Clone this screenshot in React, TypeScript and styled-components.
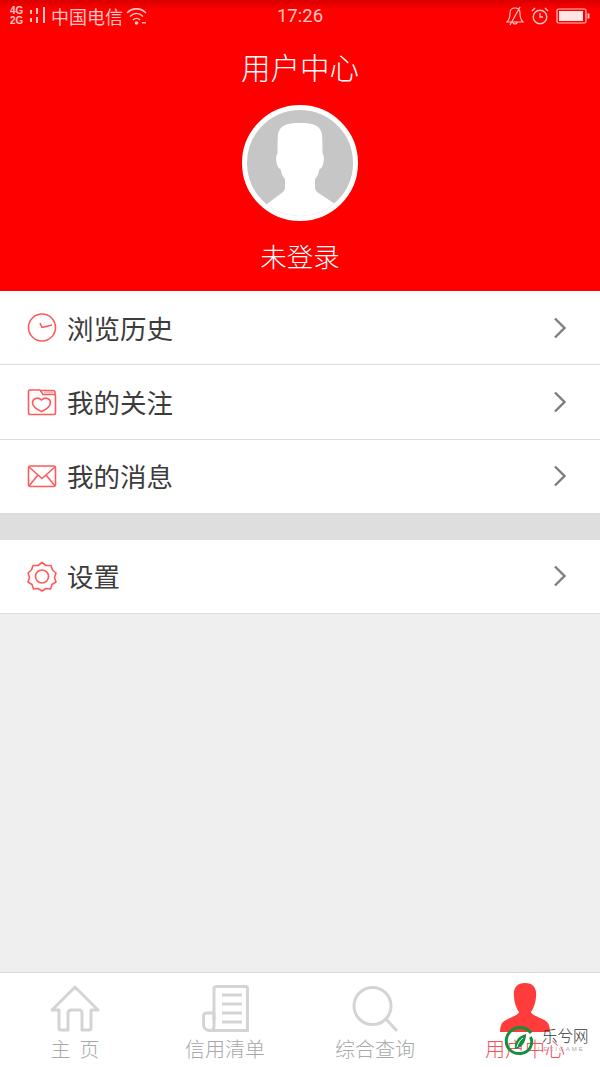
import React from 'react';
import styled, { createGlobalStyle } from 'styled-components';

const GlobalStyle = createGlobalStyle`
  html, body {
    margin: 0;
    padding: 0;
    background-color: #efefef;
    font-family: "Noto Sans CJK SC", "Liberation Sans", sans-serif;
  }
`;

const Page = styled.div`
  width: 600px;
  height: 1067px;
  display: flex;
  flex-direction: column;
  overflow: hidden;
  position: relative;
  background-color: #efefef;
`;

const Header = styled.header`
  height: 291px;
  flex: none;
  display: flex;
  flex-direction: column;
  align-items: center;
  background: linear-gradient(#d80000 0, #ff0000 10px);
  color: #fff;
`;

const StatusBar = styled.div`
  width: 100%;
  height: 32px;
  box-sizing: border-box;
  padding: 0 10px;
  display: grid;
  grid-template-columns: 1fr auto 1fr;
  align-items: center;
  color: #ffc4c4;
`;

const StatusLeft = styled.div`
  display: flex;
  align-items: center;
`;

const StatusRight = styled.div`
  display: flex;
  align-items: center;
  justify-content: flex-end;
  gap: 7px;
`;

const NetworkLabels = styled.div`
  display: flex;
  flex-direction: column;
  width: 19px;
  font: bold 10px/10px "Liberation Sans", sans-serif;
`;

const Carrier = styled.span`
  margin: 0 3px 0 4px;
  font-size: 18px;
  line-height: 20px;
`;

const Clock = styled.span`
  font: 18.5px/20px Roboto, sans-serif;
`;

const Title = styled.h1`
  margin: 14px 0 0;
  font-size: 29.5px;
  line-height: 40px;
  font-weight: 300;
`;

const Avatar = styled.div`
  width: 116px;
  height: 116px;
  box-sizing: border-box;
  margin-top: 19px;
  border: 5px solid #fff;
  border-radius: 50%;
  background-color: #c6c6c6;
  overflow: hidden;
  flex: none;
`;

const LoginState = styled.div`
  margin-top: 16px;
  font-size: 26.5px;
  line-height: 38px;
  font-weight: 300;
`;

const MenuGroup = styled.section`
  flex: none;
`;

const MenuRow = styled.div`
  height: 74.4px;
  box-sizing: border-box;
  padding: 0 33px 0 27px;
  display: flex;
  align-items: center;
  background-color: #fff;
  border-bottom: 1px solid #dcdcdc;
`;

const MenuLabel = styled.span`
  flex: 1;
  margin-left: 9px;
  font-size: 26.5px;
  line-height: 36px;
  font-weight: 400;
  color: #3c3c3c;
`;

const Divider = styled.div`
  height: 25.5px;
  flex: none;
  background-color: #dedede;
`;

const Spacer = styled.div`
  flex: 1;
`;

const TabBar = styled.nav`
  height: 95px;
  flex: none;
  box-sizing: border-box;
  border-top: 1px solid #d8d8d8;
  background-color: #fff;
  display: grid;
  grid-template-columns: repeat(4, 150px);
`;

const Tab = styled.div`
  display: flex;
  flex-direction: column;
  align-items: center;
  padding-top: 10px;
`;

const TabIcon = styled.div`
  height: 52px;
  display: flex;
  align-items: center;
  justify-content: center;
`;

const TabLabel = styled.span<{ $active?: boolean }>`
  margin-top: 1px;
  font-size: 20px;
  line-height: 26px;
  font-weight: 300;
  white-space: pre;
  color: ${(p) => (p.$active ? '#f4505e' : '#a8a8a8')};
`;

const Watermark = styled.div`
  position: absolute;
  left: 504px;
  top: 1024px;
  display: flex;
  align-items: flex-start;
`;

const WatermarkText = styled.div`
  margin: 1px 0 0 6px;
  display: flex;
  flex-direction: column;
  color: #333;
`;

const WatermarkName = styled.span`
  font-size: 15.5px;
  line-height: 20px;
  font-weight: 300;
`;

const WatermarkSub = styled.span`
  margin-left: -4px;
  font: 6px/8px "Liberation Sans", sans-serif;
  letter-spacing: 2px;
  white-space: nowrap;
  color: #aaa;
`;

const RED = '#ff5a5a';

const Chevron = () => (
  <svg width="14" height="22" viewBox="0 0 14 22" fill="none">
    <path d="M2 1.5 L11.5 11 L2 20.5" stroke="#7d7d7d" strokeWidth="2.4" />
  </svg>
);

const ClockIcon = () => (
  <svg width="31" height="31" viewBox="0 0 31 31" fill="none" stroke={RED} strokeWidth="1.6">
    <circle cx="15" cy="15.5" r="13.5" />
    <path d="M13 11 L15 15.5 L25 13" strokeLinejoin="round" />
  </svg>
);

const FolderIcon = () => (
  <svg width="31" height="31" viewBox="0 0 31 31" fill="none" stroke={RED} strokeWidth="1.6">
    <path d="M3 3 H13 L16 7.5 H27 A1.5 1.5 0 0 1 28.5 9 V26 A1.5 1.5 0 0 1 27 27.5 H3 A1.5 1.5 0 0 1 1.500 26 V4.5 A1.5 1.5 0 0 1 3 3 Z" />
    <path d="M14 3.500 H26 A2 2 0 0 1 28 5.500 V8" />
    <rect x="17" y="4.500" width="9.500" height="2" fill="#ffb0b0" stroke="none" />
    <path d="M14.500 24.500 C10 22.500 5.500 19 5.500 15.500 C5.500 11.500 11 9.500 14.500 13 C18 9.500 23.500 11.500 23.500 15.500 C23.500 19 19 22.500 14.500 24.500 Z" />
  </svg>
);

const MailIcon = () => (
  <svg width="31" height="31" viewBox="0 0 31 31" fill="none" stroke={RED} strokeWidth="1.6">
    <rect x="1.5" y="5" width="27" height="20.5" rx="2" />
    <path d="M2 6 L15 17.5 L28 6 M2 25 L11 14 M28 25 L19 14" />
  </svg>
);

const GearIcon = () => (
  <svg width="31" height="31" viewBox="0 0 31 31" fill="none" stroke={RED} strokeWidth="1.6">
    <path d="M15 1.5 L19 4.5 L24 4.5 L25.5 9 L29 12 L27.5 16.5 L29 21 L25 23.5 L23.5 28 L19 27.5 L15 30 L11 27.5 L6.5 28 L5 23.5 L1 21 L2.5 16.5 L1 12 L4.5 9 L6 4.5 L11 4.5 Z" strokeLinejoin="round" />
    <circle cx="15" cy="15.5" r="6.5" />
  </svg>
);

const HomeIcon = () => (
  <svg width="50" height="48" viewBox="0 0 50 48" fill="none" stroke="#d4d4d4" strokeWidth="3">
    <path d="M25 2 L48 25 L41 25 V43 A2 2 0 0 1 39 45 H32 V28 A3 3 0 0 0 29 25 H21 A3 3 0 0 0 18 28 V45 H11 A2 2 0 0 1 9 43 V25 L2 25 Z" strokeLinejoin="round" />
  </svg>
);

const ListIcon = () => (
  <svg width="48" height="48" viewBox="0 0 48 48" fill="none" stroke="#d4d4d4" strokeWidth="3">
    <path d="M13 35 V3 A2 2 0 0 1 15 1.5 H45 A2 2 0 0 1 46.5 3 V45.5 H9 A6 6 0 0 1 2.5 40 V31 A3 3 0 0 1 5.5 28 H13" />
    <path d="M9 45.5 A4 4 0 0 0 13 41 V28" />
    <path d="M21 10 H41 M21 19 H41 M21 28 H41 M21 37 H41" />
  </svg>
);

const SearchIcon = () => (
  <svg width="48" height="48" viewBox="0 0 48 48" fill="none" stroke="#d4d4d4" strokeWidth="3">
    <circle cx="21.5" cy="21" r="18.5" />
    <path d="M35 34 L46 46" />
  </svg>
);

const UserIcon = () => (
  <svg width="52" height="52" viewBox="0 0 52 52" fill="#ff3b3b">
    <path d="M26 0 C35 0 38 6 37 14 C36.500 21 34 26 32 29 C33 33 44 35 48 39 C50 41 51 45 51 49 H1 C1 45 2 41 4 39 C8 35 19 33 20 29 C18 26 15.500 21 15 14 C14 6 17 0 26 0 Z" />
  </svg>
);

const WifiIcon = () => (
  <svg width="21" height="18" viewBox="0 0 21 18" fill="none" stroke="#ffc4c4" strokeWidth="1.6">
    <path d="M1 6 C6 0.500 15 0.500 20 6 M4 9.500 C8 5.500 13 5.500 17 9.500 M7 13 C9 11 12 11 14 13" />
    <circle cx="10.500" cy="16" r="1" fill="#ffc4c4" />
    <rect x="16" y="15" width="4" height="1.500" fill="#ffc4c4" stroke="none" />
  </svg>
);

const SignalBars = () => (
  <svg width="18" height="18" viewBox="0 0 18 18" fill="#ffc4c4">
    <rect x="1" y="3" width="2" height="4" />
    <rect x="1" y="11" width="2" height="4" />
    <rect x="7" y="1" width="2" height="6" />
    <rect x="7" y="10" width="2" height="6" />
    <rect x="14" y="0" width="2" height="16" />
  </svg>
);

const MuteIcon = () => (
  <svg width="18" height="20" viewBox="0 0 18 20" fill="none" stroke="#ffc4c4" strokeWidth="1.2">
    <path d="M1 16 H17 C14 13 14 10 14 7 C14 4 12 2 9 2 C6 2 4 4 4 7 C4 10 4 13 1 16 Z M7 16 A2 2 0 0 0 11 16 M14 1 L4 19" />
  </svg>
);

const AlarmIcon = () => (
  <svg width="18" height="18" viewBox="0 0 18 18" fill="none" stroke="#ffc4c4" strokeWidth="1.4">
    <circle cx="9" cy="10" r="6.800" />
    <path d="M9 6 V10 H12 M1 4 L4 1 M17 4 L14 1" />
  </svg>
);

const BatteryIcon = () => (
  <svg width="34" height="16" viewBox="0 0 34 16" fill="none">
    <rect x="1" y="1" width="29" height="14" rx="1.500" stroke="#ffc4c4" strokeWidth="1.200" />
    <rect x="3" y="3" width="24" height="10" fill="#ffe6e6" />
    <rect x="31.500" y="5.500" width="2" height="5" fill="#ffc4c4" />
  </svg>
);

const AvatarFigure = () => (
  <svg width="106" height="106" viewBox="0 0 106 106" fill="#fff">
    <path d="M53 13 C66 13 73 15 75 24 C75.500 30 75.500 38 75.500 44 C77.500 45 77 52 75.500 56 C74.500 58 73.500 59 72.500 59 C71.500 64 70 67 68 69 V79 L70 82 L88 94 L106 106 H0 L20 94 L36 82 L38 79 V69 C36 67 34.500 64 33.500 59 C32.500 59 31.500 58 30.500 56 C29 52 28.500 45 30.500 44 C30.500 38 30.500 30 31 24 C33 15 40 13 53 13 Z" />
  </svg>
);

const WatermarkLogo = () => (
  <svg width="32" height="32" viewBox="0 0 32 32" fill="none">
    <path d="M27 9 C23 3.500 14 1.500 8 6 C1 11 0.500 21 6 26 C12 31.500 22 30.500 26 24 C28 20.500 28 16 26.500 13" stroke="#12903c" strokeWidth="3" />
    <path d="M11 25 C10 18 14 12 22 10 C22 18 18 24 11 25 Z" fill="#12903c" />
    <path d="M13 23 C14 19 16 16 19 14" stroke="#fff" strokeWidth="1" />
  </svg>
);

const menuTop = [
  { label: '浏览历史', icon: <ClockIcon /> },
  { label: '我的关注', icon: <FolderIcon /> },
  { label: '我的消息', icon: <MailIcon /> },
];

const tabs = [
  { label: '主  页', icon: <HomeIcon /> },
  { label: '信用清单', icon: <ListIcon /> },
  { label: '综合查询', icon: <SearchIcon /> },
  { label: '用户中心', icon: <UserIcon />, active: true },
];

const App: React.FC = () => (
  <Page>
    <GlobalStyle />
    <Header>
      <StatusBar>
        <StatusLeft>
          <NetworkLabels>
            <span>4G</span>
            <span>2G</span>
          </NetworkLabels>
          <SignalBars />
          <Carrier>中国电信</Carrier>
          <WifiIcon />
        </StatusLeft>
        <Clock>17:26</Clock>
        <StatusRight>
          <MuteIcon />
          <AlarmIcon />
          <BatteryIcon />
        </StatusRight>
      </StatusBar>
      <Title>用户中心</Title>
      <Avatar>
        <AvatarFigure />
      </Avatar>
      <LoginState>未登录</LoginState>
    </Header>
    <MenuGroup>
      {menuTop.map((item) => (
        <MenuRow key={item.label}>
          {item.icon}
          <MenuLabel>{item.label}</MenuLabel>
          <Chevron />
        </MenuRow>
      ))}
    </MenuGroup>
    <Divider />
    <MenuGroup>
      <MenuRow>
        <GearIcon />
        <MenuLabel>设置</MenuLabel>
        <Chevron />
      </MenuRow>
    </MenuGroup>
    <Spacer />
    <TabBar>
      {tabs.map((tab) => (
        <Tab key={tab.label}>
          <TabIcon>{tab.icon}</TabIcon>
          <TabLabel $active={tab.active}>{tab.label}</TabLabel>
        </Tab>
      ))}
    </TabBar>
    <Watermark>
      <WatermarkLogo />
      <WatermarkText>
        <WatermarkName>乐兮网</WatermarkName>
        <WatermarkSub>LEXIGAME</WatermarkSub>
      </WatermarkText>
    </Watermark>
  </Page>
);

export default App;
